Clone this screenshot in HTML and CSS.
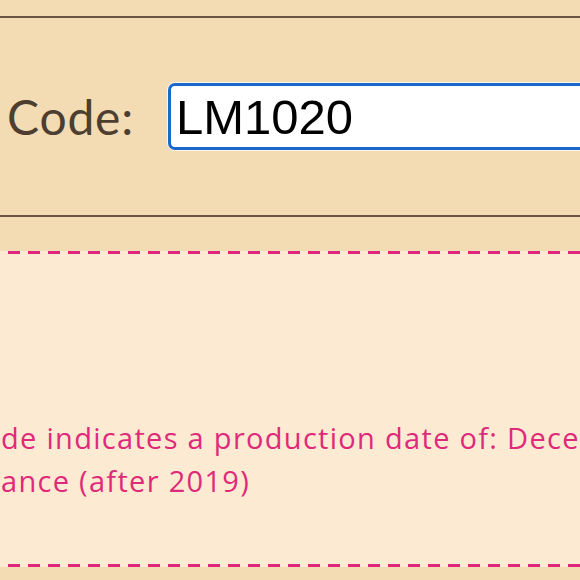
FILE: index.html
```html
<!DOCTYPE html>
<html lang="en">
<head>
<meta charset="utf-8">
<title>Code lookup</title>
<link rel="stylesheet" href="styles.css">
</head>
<body>
<div class="page">
  <div class="top-strip"></div>
  <div class="code-row">
    <label class="code-label" for="code">Code:</label>
    <input class="code-input" id="code" type="text" value="LM1020">
  </div>
  <div class="gap"></div>
  <div class="result">
    <p class="result-text">de indicates a production date of: December 2020<br>ance (after 2019)</p>
  </div>
  <div class="bottom-strip"></div>
</div>
</body>
</html>
```

FILE: styles.css
```css
html, body {
  margin: 0;
  padding: 0;
  background: #f3dcb3;
  overflow: hidden;
}
.page {
  width: 580px;
  height: 580px;
  overflow: hidden;
  display: flex;
  flex-direction: column;
}
.top-strip {
  height: 16px;
  flex: none;
}
.code-row {
  flex: none;
  height: 197px;
  border-top: 2px solid #6b5646;
  border-bottom: 2px solid #6b5646;
  display: flex;
  align-items: center;
  gap: 34px;
  padding-left: 7px;
}
.code-label {
  font-family: Lato, "Open Sans", sans-serif;
  font-size: 48px;
  letter-spacing: 0.8px;
  color: #4d3e31;
  line-height: 1;
}
.code-input {
  flex: none;
  width: 480px;
  height: 67px;
  box-sizing: border-box;
  margin: 0;
  border: 3px solid #1b68cc;
  border-radius: 7px;
  box-shadow: 0 0 0 1px rgba(255,255,255,0.7);
  background: #fff;
  padding: 0 0 0 5px;
  font-family: "Liberation Sans", Arial, sans-serif;
  font-size: 49px;
  color: #000;
  outline: none;
}
.gap {
  height: 34px;
  flex: none;
}
.result {
  flex: none;
  height: 316px;
  box-sizing: border-box;
  background-color: #fdead2;
  background-image:
    repeating-linear-gradient(to right, transparent 0 8px, #e0267c 8px 20px),
    repeating-linear-gradient(to right, transparent 0 8px, #e0267c 8px 20px);
  background-size: 100% 3px, 100% 3px;
  background-position: 0 0, 0 100%;
  background-repeat: no-repeat;
  padding-top: 165px;
}
.result-text {
  margin: 0;
  padding-left: 1px;
  white-space: nowrap;
  font-family: "Open Sans", Lato, sans-serif;
  font-size: 29px;
  font-weight: 500;
  letter-spacing: 1.3px;
  line-height: 43px;
  color: #df2a7b;
}
.bottom-strip {
  flex: 1;
}
```
